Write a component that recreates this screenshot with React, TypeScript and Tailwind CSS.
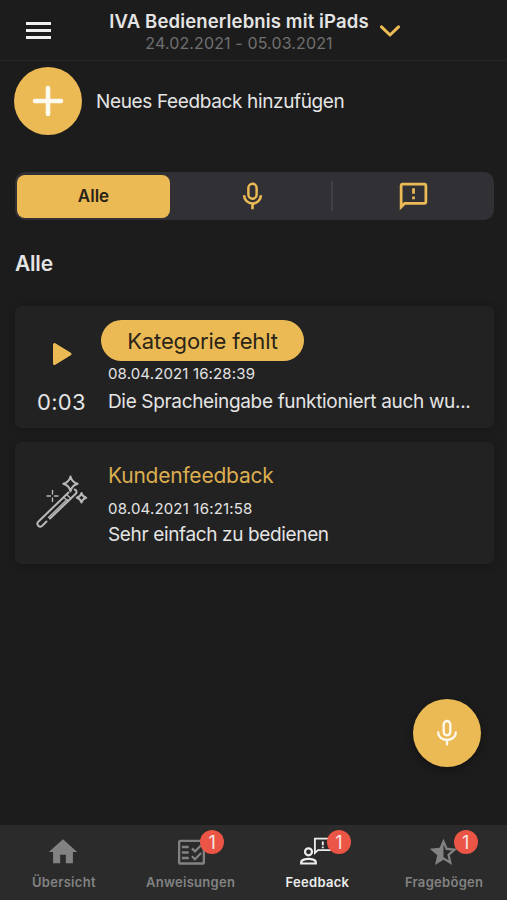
import { ReactNode } from "react";

const PATHS = {
  home: "M10 20v-6h4v6h5v-8h3L12 3 2 12h3v8z",
  feedback:
    "M20 2H4c-1.1 0-1.99.9-1.99 2L2 22l4-4h14c1.1 0 2-.9 2-2V4c0-1.1-.9-2-2-2zm0 14H5.17L4 17.17V4h16v12zm-9-4h2v2h-2zm0-6h2v4h-2z",
  starHalf:
    "M22 9.240l-7.190-.62L12 2 9.190 8.630 2 9.240l5.460 4.730L5.820 21 12 17.270 18.180 21l-1.630-7.030L22 9.240zM12 15.400V6.100l1.710 4.040 4.380.38-3.320 2.880 1 4.280L12 15.400z",
};

function Icon({ name, className }: { name: keyof typeof PATHS; className?: string }) {
  return (
    <svg viewBox="0 0 24 24" fill="currentColor" className={className}>
      <path d={PATHS[name]} />
    </svg>
  );
}

function MicIcon() {
  return (
    <svg viewBox="0 0 24 24" className="size-[33px]" fill="none" stroke="currentColor">
      <rect x="9" y="2.800" width="6" height="10.800" rx="3" strokeWidth="1.800" />
      <path d="M5.900 11c0 3.600 2.900 6.100 6.100 6.100s6.100-2.500 6.100-6.100M12 17v4.200" strokeWidth="1.900" />
    </svg>
  );
}

function ChecklistIcon() {
  return (
    <svg viewBox="0 0 24 24" className="ml-[2px] size-[33px]" fill="none" stroke="currentColor">
      <rect x="3" y="3.500" width="18" height="16.500" rx="1" strokeWidth="1.700" />
      <path d="M5 8h5M5 12h5M5 16h5" strokeWidth="1.700" />
      <path d="M12.300 9l2.200 2.200 4.500-4.500M12.300 14.700l2.200 2.200 4.500-4.500" strokeWidth="1.600" />
    </svg>
  );
}

function PersonFeedbackIcon() {
  return (
    <svg viewBox="0 0 36 30" className="ml-px h-[30px] w-9" fill="none" stroke="currentColor">
      <circle cx="9.500" cy="14.800" r="3.500" strokeWidth="2.200" />
      <path d="M2.200 26.500v-1.200c0-2.400 4.600-3.500 7.300-3.500s7.300 1.100 7.300 3.500v1.200z" strokeWidth="2.200" />
      <path d="M15.900 16V1.600h17v11.600H19z" strokeWidth="1.800" />
      <path d="M23.800 4.500v3.700M23.800 9.500v1.800" strokeWidth="1.900" />
    </svg>
  );
}

function WandIcon() {
  return (
    <svg
      viewBox="0 0 56 56"
      className="-ml-[2px] size-14"
      fill="none"
      stroke="#b8b8b8"
      strokeWidth="2"
      strokeLinejoin="round"
      strokeLinecap="round"
    >
      <path d="M37.500 3.500c1.200 4.500 3 6.200 7.200 7.300-4.200 1.100-6 2.900-7.200 7.400-1.200-4.500-3-6.300-7.200-7.400 4.200-1.100 6-2.800 7.200-7.300z" />
      <path d="M48.500 20c.7 2.900 1.900 4.100 4.700 4.800-2.800.7-4 1.900-4.700 4.800-.7-2.900-1.900-4.100-4.700-4.800 2.800-.7 4-1.900 4.700-4.800z" />
      <path d="M19.500 17.500v3.500M19.500 25v3.500M14 23h3.500M21.500 23H25" strokeWidth="1.400" />
      <path d="M35.500 19.500L5 49c-2 2.500 1.500 6 4 4l4.500-4.500M17 45.500L42.500 21c1.800-1.800 1-4-.8-4.500" />
      <path d="M15.500 44.500L34 26.500M30.500 24.500l5 3.500M33.500 21.500l4.500 4" strokeWidth="1.400" />
    </svg>
  );
}

function Tab({
  label,
  icon,
  badge,
  active,
}: {
  label: string;
  icon: ReactNode;
  badge?: number;
  active?: boolean;
}) {
  return (
    <div className={`flex flex-1 flex-col items-center pt-[9px] ${active ? "text-[#ededed]" : "text-[#828282]"}`}>
      <div className="relative flex h-[36px] w-10 items-center justify-center">
        {icon}
        {badge && (
          <span className="absolute -top-[4px] left-[30px] flex size-6 items-center justify-center rounded-full bg-[#ea5545] text-[18px] text-[#f6e6e4]">
            {badge}
          </span>
        )}
      </div>
      <span className="mt-[3px] ml-px text-[13px] leading-[18px] font-semibold tracking-[0.3px]">{label}</span>
    </div>
  );
}

export default function App() {
  return (
    <div className="flex h-[900px] w-[507px] flex-col overflow-hidden bg-[#1c1c1c] font-['Inter',sans-serif] text-[#e4e4e4]">
      {/* Header */}
      <header className="flex h-[61px] shrink-0 border-b border-[#282828]">
        <div className="flex w-[94px] flex-col gap-[4px] pt-[22px] pl-[26px]">
          <div className="h-[3px] w-[25px] bg-[#f0f0f0]" />
          <div className="h-[3px] w-[25px] bg-[#f0f0f0]" />
          <div className="h-[3px] w-[25px] bg-[#f0f0f0]" />
        </div>
        <div className="flex w-[290px] flex-col items-center pt-[11px] whitespace-nowrap">
          <h1 className="text-[18.500px] leading-[21px] font-semibold tracking-[0.14px]">IVA Bedienerlebnis mit iPads</h1>
          <p className="text-[16px] leading-[22px] tracking-[0.13px] text-[#707070]">24.02.2021 - 05.03.2021</p>
        </div>
        <svg viewBox="0 0 20 12" className="mt-[25px] -ml-[4px] h-3 w-5" fill="none" stroke="#ecbb55" strokeWidth="3">
          <path d="M1.500 1.800L10 10l8.500-8.200" strokeLinecap="round" strokeLinejoin="round" />
        </svg>
      </header>

      <main className="flex flex-1 flex-col pr-[13px] pl-[15px]">
        <div className="mt-[6px] -ml-px flex items-center gap-[14px]">
          <button className="flex size-[68px] items-center justify-center rounded-full bg-[#ebba55]">
            <svg viewBox="0 0 32 32" className="size-8" stroke="#fffaf0" strokeWidth="4.600" strokeLinecap="round">
              <path d="M16 3v26M3 16h26" />
            </svg>
          </button>
          <span className="mt-[2px] text-[19px] tracking-[-0.36px]">Neues Feedback hinzufügen</span>
        </div>

        {/* Filter */}
        <div className="mt-[37px] flex h-[48px] items-center rounded-[10px] bg-[#313035] p-[2px] text-[#ebba55]">
          <div className="flex h-[43px] w-[153px] items-center justify-center rounded-[8px] bg-[#ebba55] pt-[2px] text-[17px] font-semibold text-[#2a2417]">
            Alle
          </div>
          <div className="flex flex-1 justify-center pl-[4px]">
            <MicIcon />
          </div>
          <div className="h-[30px] w-[2px] bg-[#414045]" />
          <div className="flex flex-1 justify-center pl-[2px]">
            <Icon name="feedback" className="size-[33px]" />
          </div>
        </div>

        <h2 className="mt-[30px] text-[21px] leading-[28px] font-semibold tracking-[-0.2px]">Alle</h2>

        {/* Entries */}
        <article className="mt-[28px] flex h-[122px] rounded-[6px] bg-[#222222] shadow-[0_1px_8px_rgba(0,0,0,0.2)]">
          <div className="flex w-[93px] flex-col items-center pt-[36px]">
            <svg viewBox="0 0 20 24" className="h-6 w-5" fill="#ebba55" stroke="#ebba55" strokeWidth="3" strokeLinejoin="round">
              <path d="M2.500 2.500v19L18 12z" />
            </svg>
            <span className="mt-[22px] text-[22px] leading-[28px] tracking-[0.3px]">0:03</span>
          </div>
          <div className="flex flex-col items-start whitespace-nowrap">
            <span className="mt-[14px] -ml-[7px] flex h-[41px] w-[203px] items-center justify-center rounded-full bg-[#ebba55] pt-[2px] text-[22px] tracking-[-0.15px] text-[#2a2417]">
              Kategorie fehlt
            </span>
            <span className="mt-[3px] text-[15px] leading-[20px] tracking-[0.14px]">08.04.2021 16:28:39</span>
            <span className="mt-[5px] text-[19px] leading-[26px] tracking-[-0.34px]">
              Die Spracheingabe funktioniert auch wu...
            </span>
          </div>
        </article>

        <article className="mt-[14px] flex h-[122px] rounded-[6px] bg-[#222222] shadow-[0_2px_8px_rgba(0,0,0,0.2)]">
          <div className="flex w-[93px] justify-center pt-[31px]">
            <WandIcon />
          </div>
          <div className="flex flex-col whitespace-nowrap">
            <span className="mt-[20px] text-[21px] leading-[28px] tracking-[-0.22px] text-[#dcae50]">Kundenfeedback</span>
            <span className="mt-[9px] text-[15px] leading-[20px] tracking-[0.18px]">08.04.2021 16:21:58</span>
            <span className="mt-[3px] text-[19px] leading-[26px] tracking-[-0.36px]">Sehr einfach zu bedienen</span>
          </div>
        </article>

        <button className="mt-auto mr-[13px] mb-[58px] flex size-[68px] items-center justify-center self-end rounded-full bg-[#ebba55] shadow-[0_3px_8px_rgba(0,0,0,0.35)]">
          <svg viewBox="0 0 22 28" className="h-7 w-[22px]" fill="none" stroke="#fffaf0" strokeWidth="2.300" strokeLinecap="round">
            <rect x="7.700" y="2" width="6.600" height="14.300" rx="3.300" />
            <path d="M2.200 13.500c0 4.500 4 7.500 8.800 7.500s8.800-3 8.800-7.500M11 21v4.500" />
          </svg>
        </button>
      </main>

      {/* Bottom tabs */}
      <nav className="flex h-[75px] shrink-0 bg-[#2b2b2b]">
        <Tab label="Übersicht" icon={<Icon name="home" className="size-[34px]" />} />
        <Tab label="Anweisungen" icon={<ChecklistIcon />} badge={1} />
        <Tab label="Feedback" icon={<PersonFeedbackIcon />} badge={1} active />
        <Tab label="Fragebögen" icon={<Icon name="starHalf" className="size-[33px]" />} badge={1} />
      </nav>
    </div>
  );
}
